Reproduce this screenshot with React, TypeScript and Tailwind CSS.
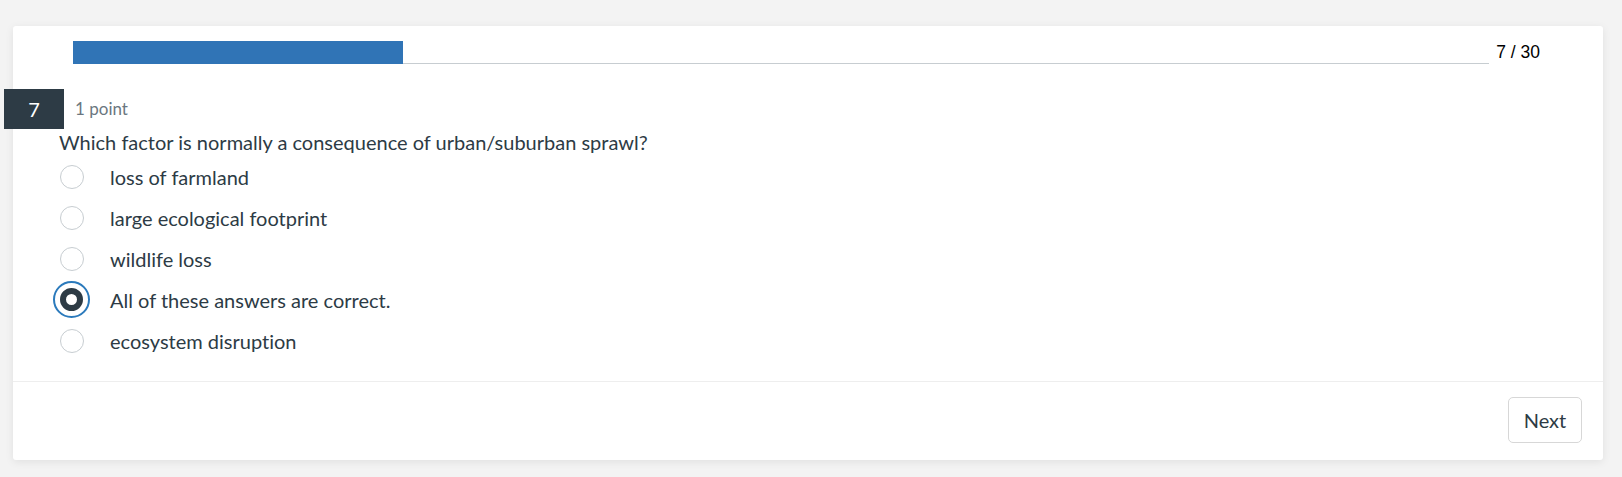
import React, { useState } from 'react';

const options = [
  'loss of farmland',
  'large ecological footprint',
  'wildlife loss',
  'All of these answers are correct.',
  'ecosystem disruption',
];

const App: React.FC = () => {
  const [selected, setSelected] = useState(3);
  const current = 7;
  const total = 30;

  return (
    <div className="min-h-screen bg-[#f3f3f3] pt-[26px] pl-[13px] pr-[19px] pb-[18px] font-['Lato',sans-serif] text-[#2d3b45] [font-variant-ligatures:none]">
      <div className="bg-white rounded-[3px] shadow-[0_2px_8px_rgba(0,0,0,0.08)]">
        {/* Progress */}
        <div className="flex items-center pt-[15px] pl-[60px] pr-[63px]">
          <div className="relative flex-1 h-[23px] border-b border-[#c7cdd1]">
            <div
              className="absolute left-0 top-0 h-[23px] bg-[#3074b6]"
              style={{ width: `${(current / total) * 100}%` }}
            />
          </div>
          <span className="ml-[7px] text-[17.5px] leading-none text-black font-['Liberation_Sans',Arial,sans-serif]">
            {current} / {total}
          </span>
        </div>

        {/* Question header */}
        <div className="flex items-center mt-[25px] h-[40px]">
          <div className="-ml-[9px] w-[60px] h-[40px] bg-[#2d3b45] text-white flex items-center justify-center text-[20px]">
            {current}
          </div>
          <span className="ml-[11px] text-[17px] text-[#6b7780]">1 point</span>
        </div>

        <div className="pl-[46px] text-[20px] leading-[26px]">
          Which factor is normally a consequence of urban/suburban sprawl?
        </div>

        {/* Options */}
        <div className="mt-[1px] pb-[20px]">
          {options.map((opt, i) => (
            <label
              key={opt}
              className="flex items-center h-[41px] pl-[40px] cursor-pointer"
              onClick={() => setSelected(i)}
            >
              <span className="w-[37px] h-[37px] flex items-center justify-center">
                {selected === i ? (
                  <span className="w-[37px] h-[37px] rounded-full border-2 border-[#2b7abc] flex items-center justify-center">
                    <span className="w-[23px] h-[23px] rounded-full border-[6px] border-[#2d3b45] bg-white" />
                  </span>
                ) : (
                  <span className="w-[24px] h-[24px] rounded-full border border-[#c7cdd1] bg-white" />
                )}
              </span>
              <span className="ml-[20px] text-[20px] leading-[26px]">{opt}</span>
            </label>
          ))}
        </div>

        {/* Footer */}
        <div className="border-t border-[#eeeeee] flex justify-end pt-[15px] pb-[17px] pr-[21px]">
          <button className="w-[74px] h-[46px] rounded-[5px] border border-[#d7d7d7] bg-white text-[20px] text-[#2d3b45]">
            Next
          </button>
        </div>
      </div>
    </div>
  );
};

export default App;
